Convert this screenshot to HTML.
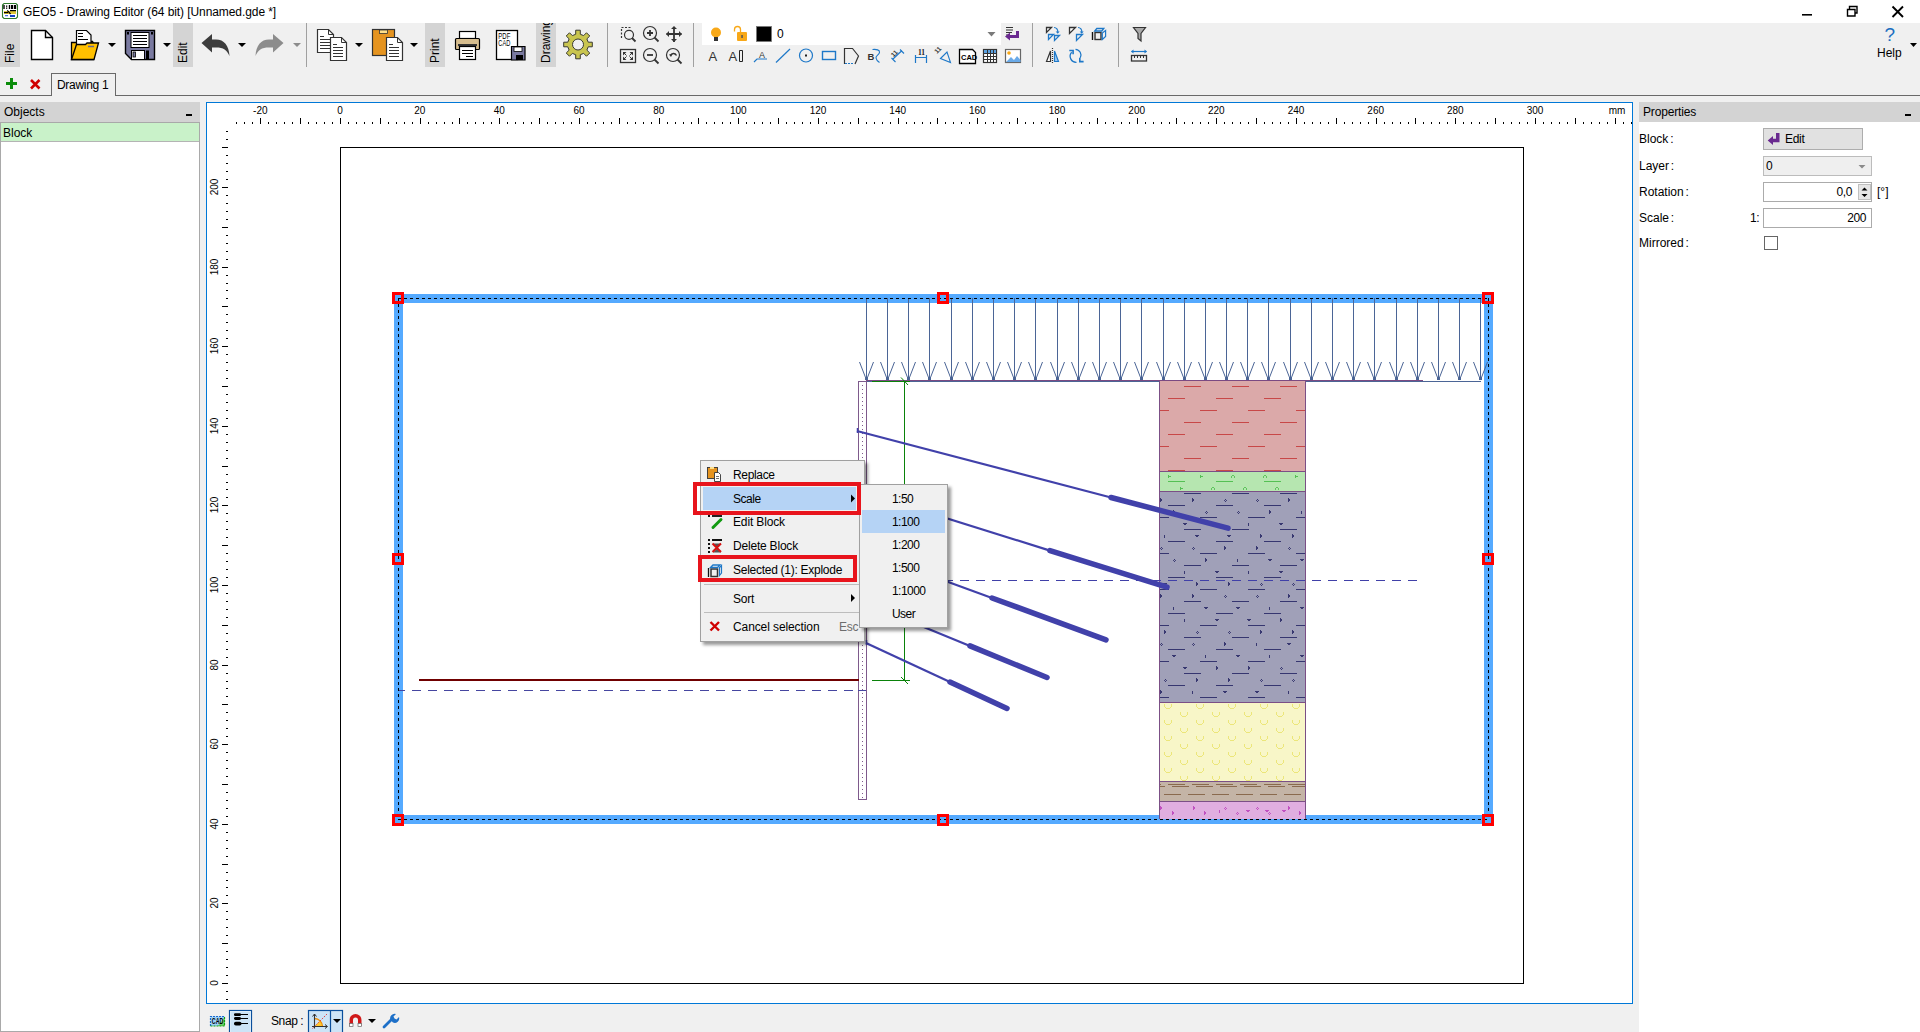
<!DOCTYPE html>
<html><head><meta charset="utf-8">
<style>
html,body{margin:0;padding:0;width:1920px;height:1032px;overflow:hidden;background:#f0f0f0;font-family:"Liberation Sans",sans-serif;}
.a{position:absolute;}
.t{position:absolute;white-space:nowrap;font-size:12px;line-height:14px;color:#000;}
svg{position:absolute;overflow:visible;}
</style></head><body>
<div class="a" style="left:0px;top:0px;width:1920px;height:23px;background:#fff;"></div>
<div class="a" style="left:0px;top:102px;width:200px;height:930px;background:#fff;"></div>
<div class="a" style="left:0px;top:102px;width:200px;height:20px;background:#d3d3d3;"></div>
<div class="a" style="left:0px;top:122px;width:200px;height:1px;background:#a9a9a9;"></div>
<div class="a" style="left:0px;top:122px;width:1px;height:910px;background:#a9a9a9;"></div>
<div class="a" style="left:199px;top:122px;width:1px;height:910px;background:#a9a9a9;"></div>
<div class="a" style="left:0px;top:1031px;width:200px;height:1px;background:#a9a9a9;"></div>
<div class="a" style="left:1px;top:123px;width:198px;height:18px;background:#c9f2c9;"></div>
<div class="a" style="left:1px;top:141px;width:198px;height:1px;background:#b4b4b4;"></div>
<div class="t" style="left:4px;top:105px;font-size:12px;color:#000;">Objects</div>
<div class="a" style="left:186px;top:114px;width:6px;height:2px;background:#000;"></div>
<div class="t" style="left:3px;top:126px;font-size:12px;color:#000;">Block</div>
<div class="a" style="left:1639px;top:102px;width:281px;height:930px;background:#fff;"></div>
<div class="a" style="left:1639px;top:102px;width:281px;height:20px;background:#d3d3d3;"></div>
<div class="t" style="left:1643px;top:105px;font-size:12px;color:#000;letter-spacing:-0.15px">Properties</div>
<div class="a" style="left:1905px;top:114px;width:6px;height:2px;background:#000;"></div>
<div class="a" style="left:206px;top:102px;width:1427px;height:902px;background:#fff;box-sizing:border-box;border:1px solid #0078d7"></div>
<div class="a" style="left:0px;top:95px;width:52px;height:1px;background:#696969;"></div>
<div class="a" style="left:115px;top:95px;width:1805px;height:1px;background:#696969;"></div>
<div class="a" style="left:51px;top:73px;width:65px;height:23px;background:#f0f0f0;box-sizing:border-box;border:1px solid #696969;border-bottom:none"></div>
<div class="t" style="left:57px;top:78px;font-size:12px;color:#000;letter-spacing:-0.3px">Drawing 1</div>
<svg style="left:0px;top:70px;" width="50" height="25" viewBox="0 0 50 25"><path d="M11.5 8v11M6 13.5h11" stroke="#0a8c0a" stroke-width="3"/><path d="M31 10l8.5 8.5M39.5 10L31 18.5" stroke="#d00000" stroke-width="2.6"/></svg>
<div class="a" style="left:0px;top:23px;width:20px;height:44px;background:#d4d4d4;"></div>
<div class="a" style="left:0;top:23px;width:20px;height:44px;overflow:hidden"><div class="t" style="left:-12px;top:16px;width:44px;transform:rotate(-90deg);text-align:left;text-indent:5px">File</div></div>
<div class="a" style="left:173px;top:23px;width:20px;height:44px;background:#d4d4d4;"></div>
<div class="a" style="left:173px;top:23px;width:20px;height:44px;overflow:hidden"><div class="t" style="left:-12px;top:16px;width:44px;transform:rotate(-90deg);text-align:left;text-indent:5px">Edit</div></div>
<div class="a" style="left:425px;top:23px;width:20px;height:44px;background:#d4d4d4;"></div>
<div class="a" style="left:425px;top:23px;width:20px;height:44px;overflow:hidden"><div class="t" style="left:-12px;top:16px;width:44px;transform:rotate(-90deg);text-align:left;text-indent:5px">Print</div></div>
<div class="a" style="left:536px;top:23px;width:20px;height:44px;background:#d4d4d4;"></div>
<div class="a" style="left:536px;top:23px;width:20px;height:44px;overflow:hidden"><div class="t" style="left:-12px;top:16px;width:44px;transform:rotate(-90deg);text-align:left;text-indent:5px">Drawing</div></div>
<div class="a" style="left:306px;top:23px;width:1px;height:44px;background:#a0a0a0;"></div>
<div class="a" style="left:607px;top:23px;width:1px;height:44px;background:#a0a0a0;"></div>
<div class="a" style="left:693px;top:23px;width:1px;height:44px;background:#a0a0a0;"></div>
<div class="a" style="left:1032px;top:23px;width:1px;height:44px;background:#a0a0a0;"></div>
<div class="a" style="left:1118px;top:23px;width:1px;height:44px;background:#a0a0a0;"></div>
<div class="a" style="left:702px;top:23px;width:299px;height:22px;background:#fff;"></div>
<svg style="left:0px;top:0px;left:0;top:0" width="1920" height="70" viewBox="0 0 1920 70"><path d="M31.5 30.5h14l7 7v22h-21z" fill="#fff" stroke="#000" stroke-width="1.4"/><path d="M45.5 30.5v7h7" fill="none" stroke="#000" stroke-width="1.4"/><path d="M71.5 42.5h7l1-1h13l1 2v16h-22z" fill="#ffbf00" stroke="#000" stroke-width="1.3"/><path d="M76.5 30.5h10l4.5 4.5v12.5h-14.5z" fill="#fff" stroke="#000" stroke-width="1.2"/><path d="M78 33.5h5M78 36.5h5M78 39.5h10" stroke="#000" stroke-width="1"/><path d="M71.5 59.5l5-15h9l1.5-1.5h11.5l-4.5 16.5z" fill="#ffc000" stroke="#000" stroke-width="1.3"/><path d="M88 46.5h6" stroke="#6a6a90" stroke-width="1.5"/><path d="M125.5 30.5h29v29h-23l-6-6z" fill="#7a7aa0" stroke="#000" stroke-width="1.4"/><rect x="131" y="32.5" width="18" height="15" fill="#fff" stroke="#000" stroke-width="1"/><path d="M133 35.5h14M133 38.5h14M133 41.5h14M133 44.5h14" stroke="#000" stroke-width="1"/><rect x="131.5" y="50.5" width="13" height="9" fill="#fff" stroke="#000" stroke-width="1"/><rect x="133" y="52" width="2.5" height="5" fill="#7a7aa0" stroke="#000" stroke-width="0.8"/><rect x="146" y="50.5" width="3" height="9" fill="#000"/><rect x="127" y="32" width="2" height="2.5" fill="#000"/><rect x="151" y="32" width="2" height="2.5" fill="#000"/><path d="M108 43h8l-4 4z" fill="#000"/><path d="M163 43h8l-4 4z" fill="#000"/><path d="M238 43h8l-4 4z" fill="#000"/><path d="M355 43h8l-4 4z" fill="#000"/><path d="M410 43h8l-4 4z" fill="#000"/><path d="M293 43h8l-4 4z" fill="#8c8c8c"/><path d="M201.5 43l10.5-9v5.5h4c8 0 13 6 13.5 16.5c-2.5-6-6-8.5-13.5-8.5h-4v5z" fill="#3c3c3c"/><path d="M283.5 43l-10.5-9v5.5h-4c-8 0-13 6-13.5 16.5c2.5-6 6-8.5 13.5-8.5h4v5z" fill="#8c8c8c"/><path d="M317.5 29.5h11l5 5v18h-16z" fill="#fff" stroke="#333" stroke-width="1.2"/><path d="M328.5 29.5v5h5" fill="none" stroke="#333" stroke-width="1"/><path d="M320 36.5h4M320 39.5h10M320 42.5h10M320 45.5h10M320 48.5h10" stroke="#333" stroke-width="1"/><path d="M330.5 37.5h11l5 5v18h-16z" fill="#fff" stroke="#333" stroke-width="1.2"/><path d="M341.5 37.5v5h5" fill="none" stroke="#333" stroke-width="1"/><path d="M333 44.5h4M333 47.5h10M333 50.5h10M333 53.5h10M333 56.5h10" stroke="#333" stroke-width="1"/><rect x="372.5" y="29.5" width="22" height="26" fill="#e59420" stroke="#333" stroke-width="1.2"/><rect x="379.5" y="30" width="8" height="3.5" fill="#ffe08a" stroke="#333" stroke-width="0.8"/><path d="M386.5 37.5h11l5 5v18h-16z" fill="#fff" stroke="#333" stroke-width="1.2"/><path d="M397.5 37.5v5h5" fill="none" stroke="#333" stroke-width="1"/><path d="M389 44.5h4M389 47.5h10M389 50.5h10M389 53.5h10M389 56.5h10" stroke="#333" stroke-width="1"/><rect x="459.5" y="31.5" width="16" height="7" fill="#fff" stroke="#000" stroke-width="1.2"/><rect x="455.5" y="38.5" width="24" height="11" rx="1" fill="#d6bd8e" stroke="#000" stroke-width="1.2"/><rect x="458" y="44" width="19" height="2" fill="#333"/><rect x="459.5" y="46.5" width="16" height="13" fill="#fff" stroke="#000" stroke-width="1.2"/><path d="M462 50.5h11M462 53.5h11M466 56.5h7" stroke="#000" stroke-width="1"/><rect x="496.5" y="30.5" width="21" height="29" fill="#fff" stroke="#000" stroke-width="1.3"/><text x="498.3" y="38.6" font-family="Liberation Sans" font-size="8.5" fill="#000" textLength="12" lengthAdjust="spacingAndGlyphs">PDF</text><text x="498.3" y="45.8" font-family="Liberation Sans" font-size="8.5" fill="#000" textLength="12" lengthAdjust="spacingAndGlyphs">CAD</text><path d="M511.5 46.5h13.5v13.5h-13.5z" fill="#7a7aa0" stroke="#000" stroke-width="1.2"/><rect x="514" y="47" width="8" height="4.5" fill="#fff" stroke="#000" stroke-width="0.8"/><rect x="516" y="55" width="7" height="5" fill="#000"/><path d="M588.25 42.21L592.31 42.19L592.31 46.81L588.25 46.79L586.87 50.13L589.76 52.99L586.49 56.26L583.63 53.37L580.29 54.75L580.31 58.81L575.69 58.81L575.71 54.75L572.37 53.37L569.51 56.26L566.24 52.99L569.13 50.13L567.75 46.79L563.69 46.81L563.69 42.19L567.75 42.21L569.13 38.87L566.24 36.01L569.51 32.74L572.37 35.63L575.71 34.25L575.69 30.19L580.31 30.19L580.29 34.25L583.63 35.63L586.49 32.74L589.76 36.01L586.87 38.87z M583.5 44.5a5.5 5.5 0 1 0 -11 0a5.5 5.5 0 1 0 11 0z" fill="#c9c54f" fill-rule="evenodd" stroke="#3a3a30" stroke-width="1"/><path d="M621.5 38v-10.5h10.5" fill="none" stroke="#333" stroke-width="1.2" stroke-dasharray="2 1.5"/><circle cx="629" cy="34.8" r="4.5" fill="none" stroke="#333" stroke-width="1.2"/><path d="M632 38l3.5 3.5" stroke="#333" stroke-width="1.8"/><circle cx="650" cy="33" r="6.5" fill="none" stroke="#333" stroke-width="1.2"/><path d="M654.5 37.5l4 4" stroke="#333" stroke-width="1.8"/><path d="M647 33h6M650 30v6" stroke="#333" stroke-width="1.8"/><path d="M674 27v15M666.5 34h15" stroke="#333" stroke-width="1.8"/><path d="M674 26l-3 3h6zM674 42l-3-3h6zM666 34l3-3v6zM682 34l-3-3v6z" fill="#333"/><rect x="620.5" y="49.5" width="15" height="13" fill="none" stroke="#333" stroke-width="1.3"/><path d="M623 52h3.5l-3.5 3.5zM633 52h-3.5l3.5 3.5zM623 60h3.5l-3.5-3.5zM633 60h-3.5l3.5-3.5z" fill="#333"/><path d="M624 53l2.5 2.5M632 53l-2.5 2.5M624 59l2.5-2.5M632 59l-2.5-2.5" stroke="#333" stroke-width="1"/><circle cx="650" cy="55" r="6.5" fill="none" stroke="#333" stroke-width="1.2"/><path d="M654.5 59.5l4 4" stroke="#333" stroke-width="1.8"/><path d="M647 55h6" stroke="#333" stroke-width="1.8"/><circle cx="673" cy="55" r="6.5" fill="none" stroke="#333" stroke-width="1.2"/><path d="M677.5 59.5l4 4" stroke="#333" stroke-width="1.8"/><path d="M670.5 55.5c1-2.5 4.5-3 6 0" fill="none" stroke="#333" stroke-width="1.4"/><path d="M669 54.5l3.5-0.5-1.5 3z" fill="#333"/><circle cx="716" cy="32.5" r="5" fill="#f8a818"/><rect x="714" y="37" width="4" height="4" fill="#333"/><path d="M734.5 31.5v-2a3 3 0 0 1 6 0v3" fill="none" stroke="#f8a818" stroke-width="1.3"/><rect x="737" y="32" width="10" height="9" rx="1" fill="#f8a818"/><rect x="741.3" y="35" width="1.5" height="3" fill="#555"/><rect x="756.5" y="26.5" width="15" height="15" fill="#000" stroke="#777" stroke-width="0.8"/><text x="777" y="37.5" font-family="Liberation Sans" font-size="12" fill="#000">0</text><path d="M987.5 32h8l-4 4.5z" fill="#7a7a7a"/><text x="708.5" y="61" font-family="Liberation Sans" font-size="13" fill="#333">A</text><text x="728.5" y="61" font-family="Liberation Sans" font-size="13" fill="#333">A</text><path d="M739.5 50.5h3v11h-3z" fill="none" stroke="#222" stroke-width="1"/><text x="759" y="58" font-family="Liberation Sans" font-size="9" fill="#333">A</text><path d="M754 62l3-3h10" fill="none" stroke="#1e78c8" stroke-width="1.2"/><path d="M776 62.5L790 49" stroke="#1e78c8" stroke-width="1.2"/><circle cx="806" cy="55.5" r="6.5" fill="none" stroke="#1e78c8" stroke-width="1.2"/><rect x="805" y="54.5" width="2" height="2" fill="#222"/><rect x="822.5" y="51.5" width="13" height="8" fill="none" stroke="#1e78c8" stroke-width="1.4"/><path d="M844.5 64V48.5h8l6 7.5l-3.5 8" fill="none" stroke="#333" stroke-width="1.2"/><path d="M845 63.5h9" stroke="#1e78c8" stroke-width="1.2" stroke-dasharray="2 1"/><text x="867.5" y="59.6" font-family="Liberation Sans" font-size="9.5" font-weight="bold" fill="#333">B</text><path d="M872.5 49.5c4-0.5 7.5 0.5 7 3c-0.5 2.5-4 3-3.5 5.5c0.3 2 2 3.5 3.5 4.5" fill="none" stroke="#1e78c8" stroke-width="1.1"/><path d="M892.5 59.5L902 50.5M891.5 58l4 4M900 49.5l4 4" fill="none" stroke="#1e78c8" stroke-width="1.1"/><text x="0" y="0" font-family="Liberation Sans" font-size="6.5" font-weight="bold" fill="#333" transform="translate(893.5 57.5) rotate(-45)">11</text><text x="918" y="55.3" font-family="Liberation Serif" font-size="7.5" font-weight="bold" fill="#222">11</text><path d="M915.5 55v8M926.5 55v8M915.5 57.5h11" fill="none" stroke="#1e78c8" stroke-width="1.2"/><path d="M940.5 58.5l6.5-6.5 3.5 10.5z" fill="none" stroke="#1e78c8" stroke-width="1.1"/><text x="0" y="0" font-family="Liberation Sans" font-size="6.5" font-weight="bold" fill="#333" transform="translate(937 54) rotate(-45)">11</text><path d="M959.5 49.5h13l3 3v11h-16z" fill="#fff" stroke="#000" stroke-width="1.3"/><text x="961" y="60" font-family="Liberation Sans" font-size="7.5" font-weight="bold" fill="#000">CAD</text><rect x="983.5" y="49.5" width="13" height="13" fill="#fff" stroke="#333" stroke-width="1.2"/><rect x="984" y="50" width="12" height="3" fill="#5aa0e0"/><path d="M984 53.5h12M984 56.5h12M984 59.5h12M987.5 50v12M990.5 50v12M993.5 50v12" stroke="#333" stroke-width="1"/><rect x="1005.5" y="49.5" width="15" height="13" fill="#fff" stroke="#666" stroke-width="1.2"/><circle cx="1009" cy="53" r="1.8" fill="#f8a818"/><path d="M1006 62l5-5 3 3 3-4 3.5 4v2z" fill="#6aaae8"/><path d="M1006 27.5h7M1006 30h7M1006 32.5h6M1006 35h4" stroke="#333" stroke-width="1"/><path d="M1016 31h3v7h-9v2.5l-5-4 5-4v2.5h6z" fill="#6a2a90"/><path d="M1046.5 27.5h5l-5 5z" fill="#fff" stroke="#333" stroke-width="1.3"/><path d="M1048.5 34.5h5l-5 5zM1054.5 35.5h5l-5 5z" fill="none" stroke="#1e78c8" stroke-width="1.3"/><path d="M1054 27.5c2.5 0 4 2 3.8 4.5" fill="none" stroke="#1e78c8" stroke-width="1.2"/><path d="M1055.7 31.5h4l-2 2.3z" fill="#1e78c8"/><path d="M1069.5 27.5h6l-6 6z" fill="#fff" stroke="#333" stroke-width="1.3"/><path d="M1076.5 34.5h6l-6 6z" fill="none" stroke="#1e78c8" stroke-width="1.3"/><path d="M1078 27.5c2.5 0 4 2 3.8 4.5" fill="none" stroke="#1e78c8" stroke-width="1.2"/><path d="M1079.7 31.5h4l-2 2.3z" fill="#1e78c8"/><path d="M1092.5 32v8" stroke="#111" stroke-width="1.4"/><rect x="1095" y="32.5" width="6" height="7" fill="none" stroke="#333" stroke-width="1.4"/><path d="M1094.8 31l2-2.5h7l-2 2.5z" fill="none" stroke="#1e78c8" stroke-width="1.3"/><path d="M1102.3 39.5l3.3-3v-6l-3.3 2.5z" fill="none" stroke="#1e78c8" stroke-width="1.2"/><path d="M1046.5 61.5l4-10.5v10.5z" fill="#fff" stroke="#333" stroke-width="1.2"/><path d="M1054.5 51v10.5h4z" fill="#9ccaf4" stroke="#1e78c8" stroke-width="1.2"/><path d="M1052.5 48v15" stroke="#333" stroke-width="1.2" stroke-dasharray="1 1"/><path d="M1075.5 49.3a5.8 5.8 0 0 1 4.8 8.5M1076.5 62.3a6 6 0 0 1 -4.8 -10" fill="none" stroke="#1e78c8" stroke-width="1.3"/><path d="M1069.3 50.5h3.8v3.8M1079.8 57.8v3.8h3.8" fill="none" stroke="#1e78c8" stroke-width="1.6"/><path d="M1133.5 27.5h12l-4.5 6v7.5l-3-2.5v-5z" fill="#aaa" stroke="#333" stroke-width="1.2"/><path d="M1131.5 51.5h15" stroke="#1e78c8" stroke-width="1.2"/><path d="M1131 51.5l2.5-2v4zM1147 51.5l-2.5-2v4z" fill="#1e78c8"/><rect x="1131.5" y="55.5" width="15" height="5.5" fill="none" stroke="#333" stroke-width="1.3"/><path d="M1134.5 56v2M1137.5 56v2M1140.5 56v2M1143.5 56v2" stroke="#333" stroke-width="1"/><path d="M1910 43h7l-3.5 4z" fill="#000"/></svg>
<div class="t" style="left:1884.5px;top:24px;font-size:19px;line-height:22px;color:#1a6ec0">?</div>
<div class="t" style="left:1877px;top:46px;font-size:12px;color:#000;">Help</div>
<svg style="left:0px;top:0px;left:0;top:0" width="1920" height="23" viewBox="0 0 1920 23"><path d="M4 3.5h12l1.5 1.5v12l-1.5 1.5h-12l-1.5-1.5v-12z" fill="#fff" stroke="#2e7a2e" stroke-width="1.1"/><g fill="#000"><rect x="3.3" y="5" width="1.4" height="4"/><rect x="6" y="5.5" width="1.3" height="1.3"/><rect x="6" y="7.5" width="1.3" height="1.3"/><rect x="8.8" y="5" width="1.4" height="4"/><rect x="11" y="5" width="2.2" height="4"/><rect x="14" y="5" width="2.2" height="4"/></g><rect x="4" y="11" width="12" height="3" fill="#e0c838"/><rect x="10" y="10" width="6" height="1.2" fill="#000"/><rect x="4" y="12" width="4" height="1.2" fill="#000"/><path d="M7.3 10.3l3.3 3.7" stroke="#000" stroke-width="1.2"/><rect x="5" y="15.2" width="3" height="1" fill="#2050e0"/><rect x="10" y="15" width="5" height="2" fill="#1040c8"/><path d="M1802 14.8h10" stroke="#000" stroke-width="1.6"/><path d="M1849.5 9v-2.5h7.5v6.5h-2" fill="none" stroke="#000" stroke-width="1.4"/><path d="M1847.5 9.5h7.5v6.5h-7.5z" fill="#fff" stroke="#000" stroke-width="1.4"/><path d="M1892.5 6.5l10.5 10.5M1903 6.5l-10.5 10.5" stroke="#000" stroke-width="1.9"/></svg>
<div class="t" style="left:23px;top:5px;font-size:12px;color:#000;letter-spacing:-0.08px">GEO5 - Drawing Editor (64 bit) [Unnamed.gde *]</div>
<svg style="left:0px;top:0px;left:0;top:0" width="1920" height="1032" viewBox="0 0 1920 1032"><defs><clipPath id="cv"><rect x="207" y="103" width="1425" height="900"/></clipPath></defs><g clip-path="url(#cv)" shape-rendering="crispEdges"><path d="M236.5 122v2M244.5 122v2M252.5 122v2M260.5 118v6M268.5 122v2M276.5 122v2M284.5 122v2M292.5 122v2M300.5 118v6M308.5 122v2M316.5 122v2M324.5 122v2M332.5 122v2M340.5 118v6M348.5 122v2M356.5 122v2M364.5 122v2M372.5 122v2M380.5 118v6M388.5 122v2M396.5 122v2M404.5 122v2M412.5 122v2M420.5 118v6M428.5 122v2M436.5 122v2M444.5 122v2M452.5 122v2M459.5 118v6M467.5 122v2M475.5 122v2M483.5 122v2M491.5 122v2M499.5 118v6M507.5 122v2M515.5 122v2M523.5 122v2M531.5 122v2M539.5 118v6M547.5 122v2M555.5 122v2M563.5 122v2M571.5 122v2M579.5 118v6M587.5 122v2M595.5 122v2M603.5 122v2M611.5 122v2M619.5 118v6M627.5 122v2M635.5 122v2M643.5 122v2M651.5 122v2M659.5 118v6M667.5 122v2M675.5 122v2M683.5 122v2M691.5 122v2M698.5 118v6M706.5 122v2M714.5 122v2M722.5 122v2M730.5 122v2M738.5 118v6M746.5 122v2M754.5 122v2M762.5 122v2M770.5 122v2M778.5 118v6M786.5 122v2M794.5 122v2M802.5 122v2M810.5 122v2M818.5 118v6M826.5 122v2M834.5 122v2M842.5 122v2M850.5 122v2M858.5 118v6M866.5 122v2M874.5 122v2M882.5 122v2M890.5 122v2M898.5 118v6M906.5 122v2M914.5 122v2M922.5 122v2M930.5 122v2M937.5 118v6M945.5 122v2M953.5 122v2M961.5 122v2M969.5 122v2M977.5 118v6M985.5 122v2M993.5 122v2M1001.5 122v2M1009.5 122v2M1017.5 118v6M1025.5 122v2M1033.5 122v2M1041.5 122v2M1049.5 122v2M1057.5 118v6M1065.5 122v2M1073.5 122v2M1081.5 122v2M1089.5 122v2M1097.5 118v6M1105.5 122v2M1113.5 122v2M1121.5 122v2M1129.5 122v2M1137.5 118v6M1145.5 122v2M1153.5 122v2M1161.5 122v2M1169.5 122v2M1176.5 118v6M1184.5 122v2M1192.5 122v2M1200.5 122v2M1208.5 122v2M1216.5 118v6M1224.5 122v2M1232.5 122v2M1240.5 122v2M1248.5 122v2M1256.5 118v6M1264.5 122v2M1272.5 122v2M1280.5 122v2M1288.5 122v2M1296.5 118v6M1304.5 122v2M1312.5 122v2M1320.5 122v2M1328.5 122v2M1336.5 118v6M1344.5 122v2M1352.5 122v2M1360.5 122v2M1368.5 122v2M1376.5 118v6M1384.5 122v2M1392.5 122v2M1400.5 122v2M1408.5 122v2M1415.5 118v6M1423.5 122v2M1431.5 122v2M1439.5 122v2M1447.5 122v2M1455.5 118v6M1463.5 122v2M1471.5 122v2M1479.5 122v2M1487.5 122v2M1495.5 118v6M1503.5 122v2M1511.5 122v2M1519.5 122v2M1527.5 122v2M1535.5 118v6M1543.5 122v2M1551.5 122v2M1559.5 122v2M1567.5 122v2M1575.5 118v6M1583.5 122v2M1591.5 122v2M1599.5 122v2M1607.5 122v2M1615.5 118v6M1623.5 122v2M1631.5 122v2M226 999.5h2M226 991.5h2M222 983.5h6M226 975.5h2M226 967.5h2M226 959.5h2M226 951.5h2M222 943.5h6M226 935.5h2M226 927.5h2M226 919.5h2M226 911.5h2M222 903.5h6M226 895.5h2M226 887.5h2M226 880.5h2M226 872.5h2M222 864.5h6M226 856.5h2M226 848.5h2M226 840.5h2M226 832.5h2M222 824.5h6M226 816.5h2M226 808.5h2M226 800.5h2M226 792.5h2M222 784.5h6M226 776.5h2M226 768.5h2M226 760.5h2M226 752.5h2M222 744.5h6M226 736.5h2M226 728.5h2M226 720.5h2M226 712.5h2M222 704.5h6M226 696.5h2M226 688.5h2M226 681.5h2M226 673.5h2M222 665.5h6M226 657.5h2M226 649.5h2M226 641.5h2M226 633.5h2M222 625.5h6M226 617.5h2M226 609.5h2M226 601.5h2M226 593.5h2M222 585.5h6M226 577.5h2M226 569.5h2M226 561.5h2M226 553.5h2M222 545.5h6M226 537.5h2M226 529.5h2M226 521.5h2M226 513.5h2M222 505.5h6M226 497.5h2M226 489.5h2M226 482.5h2M226 474.5h2M222 466.5h6M226 458.5h2M226 450.5h2M226 442.5h2M226 434.5h2M222 426.5h6M226 418.5h2M226 410.5h2M226 402.5h2M226 394.5h2M222 386.5h6M226 378.5h2M226 370.5h2M226 362.5h2M226 354.5h2M222 346.5h6M226 338.5h2M226 330.5h2M226 322.5h2M226 314.5h2M222 306.5h6M226 298.5h2M226 290.5h2M226 283.5h2M226 275.5h2M222 267.5h6M226 259.5h2M226 251.5h2M226 243.5h2M226 235.5h2M222 227.5h6M226 219.5h2M226 211.5h2M226 203.5h2M226 195.5h2M222 187.5h6M226 179.5h2M226 171.5h2M226 163.5h2M226 155.5h2M222 147.5h6M226 139.5h2M226 131.5h2" stroke="#000" stroke-width="1" fill="none"/></g><g clip-path="url(#cv)"><rect x="340.5" y="147.5" width="1183" height="836" fill="none" stroke="#000" stroke-width="1" shape-rendering="crispEdges"/><g shape-rendering="crispEdges" fill="#55aaff"><rect x="394" y="294" width="1099" height="9"/><rect x="394" y="815" width="1099" height="9"/><rect x="394" y="294" width="9" height="530"/><rect x="1484" y="294" width="9" height="530"/></g><path d="M866.5 298v82M859.5 362L866.5 380L873.5 362M887.5 298v82M880.5 362L887.5 380L894.5 362M908.5 298v82M901.5 362L908.5 380L915.5 362M929.5 298v82M922.5 362L929.5 380L936.5 362M951.5 298v82M944.5 362L951.5 380L958.5 362M972.5 298v82M965.5 362L972.5 380L979.5 362M993.5 298v82M986.5 362L993.5 380L1000.5 362M1014.5 298v82M1007.5 362L1014.5 380L1021.5 362M1035.5 298v82M1028.5 362L1035.5 380L1042.5 362M1057.5 298v82M1050.5 362L1057.5 380L1064.5 362M1078.5 298v82M1071.5 362L1078.5 380L1085.5 362M1099.5 298v82M1092.5 362L1099.5 380L1106.5 362M1120.5 298v82M1113.5 362L1120.5 380L1127.5 362M1141.5 298v82M1134.5 362L1141.5 380L1148.5 362M1163.5 298v82M1156.5 362L1163.5 380L1170.5 362M1184.5 298v82M1177.5 362L1184.5 380L1191.5 362M1205.5 298v82M1198.5 362L1205.5 380L1212.5 362M1226.5 298v82M1219.5 362L1226.5 380L1233.5 362M1247.5 298v82M1240.5 362L1247.5 380L1254.5 362M1268.5 298v82M1261.5 362L1268.5 380L1275.5 362M1290.5 298v82M1283.5 362L1290.5 380L1297.5 362M1311.5 298v82M1304.5 362L1311.5 380L1318.5 362M1332.5 298v82M1325.5 362L1332.5 380L1339.5 362M1353.5 298v82M1346.5 362L1353.5 380L1360.5 362M1374.5 298v82M1367.5 362L1374.5 380L1381.5 362M1396.5 298v82M1389.5 362L1396.5 380L1403.5 362M1417.5 298v82M1410.5 362L1417.5 380L1424.5 362M1438.5 298v82M1431.5 362L1438.5 380L1445.5 362M1459.5 298v82M1452.5 362L1459.5 380L1466.5 362M1480.5 298v82M1473.5 362L1480.5 380L1487.5 362" stroke="#4b6596" stroke-width="1" fill="none"/><g fill="#4b6596" shape-rendering="crispEdges"><rect x="865" y="377" width="3" height="3"/><rect x="886" y="377" width="3" height="3"/><rect x="907" y="377" width="3" height="3"/><rect x="928" y="377" width="3" height="3"/><rect x="950" y="377" width="3" height="3"/><rect x="971" y="377" width="3" height="3"/><rect x="992" y="377" width="3" height="3"/><rect x="1013" y="377" width="3" height="3"/><rect x="1034" y="377" width="3" height="3"/><rect x="1056" y="377" width="3" height="3"/><rect x="1077" y="377" width="3" height="3"/><rect x="1098" y="377" width="3" height="3"/><rect x="1119" y="377" width="3" height="3"/><rect x="1140" y="377" width="3" height="3"/><rect x="1162" y="377" width="3" height="3"/><rect x="1183" y="377" width="3" height="3"/><rect x="1204" y="377" width="3" height="3"/><rect x="1225" y="377" width="3" height="3"/><rect x="1246" y="377" width="3" height="3"/><rect x="1267" y="377" width="3" height="3"/><rect x="1289" y="377" width="3" height="3"/><rect x="1310" y="377" width="3" height="3"/><rect x="1331" y="377" width="3" height="3"/><rect x="1352" y="377" width="3" height="3"/><rect x="1373" y="377" width="3" height="3"/><rect x="1395" y="377" width="3" height="3"/><rect x="1416" y="377" width="3" height="3"/><rect x="1437" y="377" width="3" height="3"/><rect x="1458" y="377" width="3" height="3"/><rect x="1479" y="377" width="3" height="3"/><rect x="866" y="381" width="615" height="1"/></g><rect x="866" y="380" width="557" height="1" fill="#7b4a82" shape-rendering="crispEdges"/><rect x="1159" y="381" width="146" height="90" fill="#dba9a9"/><rect x="1159" y="471" width="146" height="20" fill="#b6e6b0"/><rect x="1159" y="491" width="146" height="211" fill="#a0a0b8"/><rect x="1159" y="702" width="146" height="79" fill="#f8f6c8"/><rect x="1159" y="781" width="146" height="20" fill="#c4b4a6"/><rect x="1159" y="801" width="146" height="18" fill="#e0aee0"/><g shape-rendering="crispEdges"><rect x="1184" y="386" width="17" height="1" fill="#c84848"/><rect x="1232" y="386" width="17" height="1" fill="#c84848"/><rect x="1280" y="386" width="17" height="1" fill="#c84848"/><rect x="1168" y="398" width="17" height="1" fill="#c84848"/><rect x="1216" y="398" width="17" height="1" fill="#c84848"/><rect x="1264" y="398" width="17" height="1" fill="#c84848"/><rect x="1160" y="410" width="9" height="1" fill="#c84848"/><rect x="1200" y="410" width="17" height="1" fill="#c84848"/><rect x="1248" y="410" width="17" height="1" fill="#c84848"/><rect x="1296" y="410" width="9" height="1" fill="#c84848"/><rect x="1184" y="422" width="17" height="1" fill="#c84848"/><rect x="1232" y="422" width="17" height="1" fill="#c84848"/><rect x="1280" y="422" width="17" height="1" fill="#c84848"/><rect x="1168" y="434" width="17" height="1" fill="#c84848"/><rect x="1216" y="434" width="17" height="1" fill="#c84848"/><rect x="1264" y="434" width="17" height="1" fill="#c84848"/><rect x="1160" y="446" width="9" height="1" fill="#c84848"/><rect x="1200" y="446" width="17" height="1" fill="#c84848"/><rect x="1248" y="446" width="17" height="1" fill="#c84848"/><rect x="1296" y="446" width="9" height="1" fill="#c84848"/><rect x="1184" y="458" width="17" height="1" fill="#c84848"/><rect x="1232" y="458" width="17" height="1" fill="#c84848"/><rect x="1280" y="458" width="17" height="1" fill="#c84848"/><rect x="1168" y="470" width="17" height="1" fill="#c84848"/><rect x="1216" y="470" width="17" height="1" fill="#c84848"/><rect x="1264" y="470" width="17" height="1" fill="#c84848"/><rect x="1168" y="481" width="17" height="1" fill="#55c055"/><rect x="1216" y="481" width="17" height="1" fill="#55c055"/><rect x="1264" y="481" width="17" height="1" fill="#55c055"/><rect x="1184" y="493" width="17" height="1" fill="#363670"/><rect x="1232" y="493" width="17" height="1" fill="#363670"/><rect x="1280" y="493" width="17" height="1" fill="#363670"/><rect x="1168" y="505" width="17" height="1" fill="#363670"/><rect x="1216" y="505" width="17" height="1" fill="#363670"/><rect x="1264" y="505" width="17" height="1" fill="#363670"/><rect x="1160" y="517" width="9" height="1" fill="#363670"/><rect x="1200" y="517" width="17" height="1" fill="#363670"/><rect x="1248" y="517" width="17" height="1" fill="#363670"/><rect x="1296" y="517" width="9" height="1" fill="#363670"/><rect x="1184" y="529" width="17" height="1" fill="#363670"/><rect x="1232" y="529" width="17" height="1" fill="#363670"/><rect x="1280" y="529" width="17" height="1" fill="#363670"/><rect x="1168" y="541" width="17" height="1" fill="#363670"/><rect x="1216" y="541" width="17" height="1" fill="#363670"/><rect x="1264" y="541" width="17" height="1" fill="#363670"/><rect x="1160" y="553" width="9" height="1" fill="#363670"/><rect x="1200" y="553" width="17" height="1" fill="#363670"/><rect x="1248" y="553" width="17" height="1" fill="#363670"/><rect x="1296" y="553" width="9" height="1" fill="#363670"/><rect x="1184" y="565" width="17" height="1" fill="#363670"/><rect x="1232" y="565" width="17" height="1" fill="#363670"/><rect x="1280" y="565" width="17" height="1" fill="#363670"/><rect x="1168" y="577" width="17" height="1" fill="#363670"/><rect x="1216" y="577" width="17" height="1" fill="#363670"/><rect x="1264" y="577" width="17" height="1" fill="#363670"/><rect x="1160" y="589" width="9" height="1" fill="#363670"/><rect x="1200" y="589" width="17" height="1" fill="#363670"/><rect x="1248" y="589" width="17" height="1" fill="#363670"/><rect x="1296" y="589" width="9" height="1" fill="#363670"/><rect x="1184" y="601" width="17" height="1" fill="#363670"/><rect x="1232" y="601" width="17" height="1" fill="#363670"/><rect x="1280" y="601" width="17" height="1" fill="#363670"/><rect x="1168" y="613" width="17" height="1" fill="#363670"/><rect x="1216" y="613" width="17" height="1" fill="#363670"/><rect x="1264" y="613" width="17" height="1" fill="#363670"/><rect x="1160" y="625" width="9" height="1" fill="#363670"/><rect x="1200" y="625" width="17" height="1" fill="#363670"/><rect x="1248" y="625" width="17" height="1" fill="#363670"/><rect x="1296" y="625" width="9" height="1" fill="#363670"/><rect x="1184" y="637" width="17" height="1" fill="#363670"/><rect x="1232" y="637" width="17" height="1" fill="#363670"/><rect x="1280" y="637" width="17" height="1" fill="#363670"/><rect x="1168" y="649" width="17" height="1" fill="#363670"/><rect x="1216" y="649" width="17" height="1" fill="#363670"/><rect x="1264" y="649" width="17" height="1" fill="#363670"/><rect x="1160" y="661" width="9" height="1" fill="#363670"/><rect x="1200" y="661" width="17" height="1" fill="#363670"/><rect x="1248" y="661" width="17" height="1" fill="#363670"/><rect x="1296" y="661" width="9" height="1" fill="#363670"/><rect x="1184" y="673" width="17" height="1" fill="#363670"/><rect x="1232" y="673" width="17" height="1" fill="#363670"/><rect x="1280" y="673" width="17" height="1" fill="#363670"/><rect x="1168" y="685" width="17" height="1" fill="#363670"/><rect x="1216" y="685" width="17" height="1" fill="#363670"/><rect x="1264" y="685" width="17" height="1" fill="#363670"/><rect x="1160" y="697" width="9" height="1" fill="#363670"/><rect x="1200" y="697" width="17" height="1" fill="#363670"/><rect x="1248" y="697" width="17" height="1" fill="#363670"/><rect x="1296" y="697" width="9" height="1" fill="#363670"/><path d="M1160 498v4l2.5-2z" fill="#383870"/><path d="M1192 498v4l2.5-2z" fill="#383870"/><path d="M1225.5 498.5l1.5 1.5-1.5 1.5-1.5-1.5z" fill="none" stroke="#383870" stroke-width="0.9"/><path d="M1257.5 498.5l1.5 1.5-1.5 1.5-1.5-1.5z" fill="none" stroke="#383870" stroke-width="0.9"/><path d="M1288 498v4l2.5-2z" fill="#383870"/><path d="M1173 510v4l2.5-2z" fill="#383870"/><path d="M1206.5 510.5l1.5 1.5-1.5 1.5-1.5-1.5z" fill="none" stroke="#383870" stroke-width="0.9"/><path d="M1238.5 510.5l1.5 1.5-1.5 1.5-1.5-1.5z" fill="none" stroke="#383870" stroke-width="0.9"/><path d="M1269 510v4l2.5-2z" fill="#383870"/><rect x="1301" y="511" width="1" height="2.5" fill="#383870"/><path d="M1183 523h4l-2 2.5z" fill="#383870"/><path d="M1215 523h4l-2 2.5z" fill="#383870"/><rect x="1248" y="523" width="1" height="2.5" fill="#383870"/><path d="M1279 523h4l-2 2.5z" fill="#383870"/><rect x="1164" y="535" width="1" height="2.5" fill="#383870"/><path d="M1195 535h4l-2 2.5z" fill="#383870"/><path d="M1227 535h4l-2 2.5z" fill="#383870"/><path d="M1260 534v4l2.5-2z" fill="#383870"/><path d="M1292 534v4l2.5-2z" fill="#383870"/><path d="M1161.5 546.5l1.5 1.5-1.5 1.5-1.5-1.5z" fill="none" stroke="#383870" stroke-width="0.9"/><path d="M1193.5 546.5l1.5 1.5-1.5 1.5-1.5-1.5z" fill="none" stroke="#383870" stroke-width="0.9"/><path d="M1224 546v4l2.5-2z" fill="#383870"/><path d="M1256 546v4l2.5-2z" fill="#383870"/><path d="M1289.5 546.5l1.5 1.5-1.5 1.5-1.5-1.5z" fill="none" stroke="#383870" stroke-width="0.9"/><path d="M1174.5 558.5l1.5 1.5-1.5 1.5-1.5-1.5z" fill="none" stroke="#383870" stroke-width="0.9"/><path d="M1205 558v4l2.5-2z" fill="#383870"/><rect x="1237" y="559" width="1" height="2.5" fill="#383870"/><path d="M1268 559h4l-2 2.5z" fill="#383870"/><path d="M1300 559h4l-2 2.5z" fill="#383870"/><rect x="1184" y="571" width="1" height="2.5" fill="#383870"/><path d="M1215 571h4l-2 2.5z" fill="#383870"/><rect x="1248" y="571" width="1" height="2.5" fill="#383870"/><path d="M1279 571h4l-2 2.5z" fill="#383870"/><path d="M1163 583h4l-2 2.5z" fill="#383870"/><path d="M1196 582v4l2.5-2z" fill="#383870"/><path d="M1228 582v4l2.5-2z" fill="#383870"/><path d="M1261.5 582.5l1.5 1.5-1.5 1.5-1.5-1.5z" fill="none" stroke="#383870" stroke-width="0.9"/><path d="M1293.5 582.5l1.5 1.5-1.5 1.5-1.5-1.5z" fill="none" stroke="#383870" stroke-width="0.9"/><path d="M1160 594v4l2.5-2z" fill="#383870"/><path d="M1192 594v4l2.5-2z" fill="#383870"/><path d="M1225.5 594.5l1.5 1.5-1.5 1.5-1.5-1.5z" fill="none" stroke="#383870" stroke-width="0.9"/><path d="M1257.5 594.5l1.5 1.5-1.5 1.5-1.5-1.5z" fill="none" stroke="#383870" stroke-width="0.9"/><path d="M1288 594v4l2.5-2z" fill="#383870"/><rect x="1173" y="607" width="1" height="2.5" fill="#383870"/><path d="M1204 607h4l-2 2.5z" fill="#383870"/><path d="M1236 607h4l-2 2.5z" fill="#383870"/><rect x="1269" y="607" width="1" height="2.5" fill="#383870"/><path d="M1300 607h4l-2 2.5z" fill="#383870"/><rect x="1184" y="619" width="1" height="2.5" fill="#383870"/><path d="M1215 619h4l-2 2.5z" fill="#383870"/><path d="M1247 619h4l-2 2.5z" fill="#383870"/><path d="M1280 618v4l2.5-2z" fill="#383870"/><path d="M1164 630v4l2.5-2z" fill="#383870"/><path d="M1197.5 630.5l1.5 1.5-1.5 1.5-1.5-1.5z" fill="none" stroke="#383870" stroke-width="0.9"/><path d="M1229.5 630.5l1.5 1.5-1.5 1.5-1.5-1.5z" fill="none" stroke="#383870" stroke-width="0.9"/><path d="M1260 630v4l2.5-2z" fill="#383870"/><path d="M1292 630v4l2.5-2z" fill="#383870"/><path d="M1161.5 642.5l1.5 1.5-1.5 1.5-1.5-1.5z" fill="none" stroke="#383870" stroke-width="0.9"/><path d="M1193.5 642.5l1.5 1.5-1.5 1.5-1.5-1.5z" fill="none" stroke="#383870" stroke-width="0.9"/><path d="M1224 642v4l2.5-2z" fill="#383870"/><rect x="1256" y="643" width="1" height="2.5" fill="#383870"/><path d="M1287 643h4l-2 2.5z" fill="#383870"/><path d="M1172 655h4l-2 2.5z" fill="#383870"/><rect x="1205" y="655" width="1" height="2.5" fill="#383870"/><path d="M1236 655h4l-2 2.5z" fill="#383870"/><rect x="1269" y="655" width="1" height="2.5" fill="#383870"/><path d="M1300 655h4l-2 2.5z" fill="#383870"/><path d="M1183 667h4l-2 2.5z" fill="#383870"/><path d="M1216 666v4l2.5-2z" fill="#383870"/><path d="M1248 666v4l2.5-2z" fill="#383870"/><path d="M1281.5 666.5l1.5 1.5-1.5 1.5-1.5-1.5z" fill="none" stroke="#383870" stroke-width="0.9"/><path d="M1165.5 678.5l1.5 1.5-1.5 1.5-1.5-1.5z" fill="none" stroke="#383870" stroke-width="0.9"/><path d="M1196 678v4l2.5-2z" fill="#383870"/><path d="M1228 678v4l2.5-2z" fill="#383870"/><path d="M1261.5 678.5l1.5 1.5-1.5 1.5-1.5-1.5z" fill="none" stroke="#383870" stroke-width="0.9"/><path d="M1293.5 678.5l1.5 1.5-1.5 1.5-1.5-1.5z" fill="none" stroke="#383870" stroke-width="0.9"/><path d="M1160 690v4l2.5-2z" fill="#383870"/><rect x="1192" y="691" width="1" height="2.5" fill="#383870"/><path d="M1223 691h4l-2 2.5z" fill="#383870"/><path d="M1255 691h4l-2 2.5z" fill="#383870"/><rect x="1288" y="691" width="1" height="2.5" fill="#383870"/><path d="M1168 474.5v4l2.5-2z" fill="#55c055"/><path d="M1200 474.5v4l2.5-2z" fill="#55c055"/><path d="M1232.5 475.0l1.5 1.5-1.5 1.5-1.5-1.5z" fill="none" stroke="#55c055" stroke-width="0.9"/><path d="M1264.5 475.0l1.5 1.5-1.5 1.5-1.5-1.5z" fill="none" stroke="#55c055" stroke-width="0.9"/><path d="M1295 474.5v4l2.5-2z" fill="#55c055"/><path d="M1180 486.5v4l2.5-2z" fill="#55c055"/><path d="M1212.5 487.0l1.5 1.5-1.5 1.5-1.5-1.5z" fill="none" stroke="#55c055" stroke-width="0.9"/><path d="M1244.5 487.0l1.5 1.5-1.5 1.5-1.5-1.5z" fill="none" stroke="#55c055" stroke-width="0.9"/><path d="M1276.5 487.0l1.5 1.5-1.5 1.5-1.5-1.5z" fill="none" stroke="#55c055" stroke-width="0.9"/><path d="M1164 704q0.5 4.5 4 4.5t4 -4.5" fill="none" stroke="#ece67a" stroke-width="1"/><path d="M1196 704q0.5 4.5 4 4.5t4 -4.5" fill="none" stroke="#ece67a" stroke-width="1"/><path d="M1228 704q0.5 4.5 4 4.5t4 -4.5" fill="none" stroke="#ece67a" stroke-width="1"/><path d="M1260 704q0.5 4.5 4 4.5t4 -4.5" fill="none" stroke="#ece67a" stroke-width="1"/><path d="M1292 704q0.5 4.5 4 4.5t4 -4.5" fill="none" stroke="#ece67a" stroke-width="1"/><path d="M1180 712q0.5 4.5 4 4.5t4 -4.5" fill="none" stroke="#ece67a" stroke-width="1"/><path d="M1212 712q0.5 4.5 4 4.5t4 -4.5" fill="none" stroke="#ece67a" stroke-width="1"/><path d="M1244 712q0.5 4.5 4 4.5t4 -4.5" fill="none" stroke="#ece67a" stroke-width="1"/><path d="M1276 712q0.5 4.5 4 4.5t4 -4.5" fill="none" stroke="#ece67a" stroke-width="1"/><path d="M1164 720q0.5 4.5 4 4.5t4 -4.5" fill="none" stroke="#ece67a" stroke-width="1"/><path d="M1196 720q0.5 4.5 4 4.5t4 -4.5" fill="none" stroke="#ece67a" stroke-width="1"/><path d="M1228 720q0.5 4.5 4 4.5t4 -4.5" fill="none" stroke="#ece67a" stroke-width="1"/><path d="M1260 720q0.5 4.5 4 4.5t4 -4.5" fill="none" stroke="#ece67a" stroke-width="1"/><path d="M1292 720q0.5 4.5 4 4.5t4 -4.5" fill="none" stroke="#ece67a" stroke-width="1"/><path d="M1180 728q0.5 4.5 4 4.5t4 -4.5" fill="none" stroke="#ece67a" stroke-width="1"/><path d="M1212 728q0.5 4.5 4 4.5t4 -4.5" fill="none" stroke="#ece67a" stroke-width="1"/><path d="M1244 728q0.5 4.5 4 4.5t4 -4.5" fill="none" stroke="#ece67a" stroke-width="1"/><path d="M1276 728q0.5 4.5 4 4.5t4 -4.5" fill="none" stroke="#ece67a" stroke-width="1"/><path d="M1164 736q0.5 4.5 4 4.5t4 -4.5" fill="none" stroke="#ece67a" stroke-width="1"/><path d="M1196 736q0.5 4.5 4 4.5t4 -4.5" fill="none" stroke="#ece67a" stroke-width="1"/><path d="M1228 736q0.5 4.5 4 4.5t4 -4.5" fill="none" stroke="#ece67a" stroke-width="1"/><path d="M1260 736q0.5 4.5 4 4.5t4 -4.5" fill="none" stroke="#ece67a" stroke-width="1"/><path d="M1292 736q0.5 4.5 4 4.5t4 -4.5" fill="none" stroke="#ece67a" stroke-width="1"/><path d="M1180 744q0.5 4.5 4 4.5t4 -4.5" fill="none" stroke="#ece67a" stroke-width="1"/><path d="M1212 744q0.5 4.5 4 4.5t4 -4.5" fill="none" stroke="#ece67a" stroke-width="1"/><path d="M1244 744q0.5 4.5 4 4.5t4 -4.5" fill="none" stroke="#ece67a" stroke-width="1"/><path d="M1276 744q0.5 4.5 4 4.5t4 -4.5" fill="none" stroke="#ece67a" stroke-width="1"/><path d="M1164 752q0.5 4.5 4 4.5t4 -4.5" fill="none" stroke="#ece67a" stroke-width="1"/><path d="M1196 752q0.5 4.5 4 4.5t4 -4.5" fill="none" stroke="#ece67a" stroke-width="1"/><path d="M1228 752q0.5 4.5 4 4.5t4 -4.5" fill="none" stroke="#ece67a" stroke-width="1"/><path d="M1260 752q0.5 4.5 4 4.5t4 -4.5" fill="none" stroke="#ece67a" stroke-width="1"/><path d="M1292 752q0.5 4.5 4 4.5t4 -4.5" fill="none" stroke="#ece67a" stroke-width="1"/><path d="M1180 760q0.5 4.5 4 4.5t4 -4.5" fill="none" stroke="#ece67a" stroke-width="1"/><path d="M1212 760q0.5 4.5 4 4.5t4 -4.5" fill="none" stroke="#ece67a" stroke-width="1"/><path d="M1244 760q0.5 4.5 4 4.5t4 -4.5" fill="none" stroke="#ece67a" stroke-width="1"/><path d="M1276 760q0.5 4.5 4 4.5t4 -4.5" fill="none" stroke="#ece67a" stroke-width="1"/><path d="M1164 768q0.5 4.5 4 4.5t4 -4.5" fill="none" stroke="#ece67a" stroke-width="1"/><path d="M1196 768q0.5 4.5 4 4.5t4 -4.5" fill="none" stroke="#ece67a" stroke-width="1"/><path d="M1228 768q0.5 4.5 4 4.5t4 -4.5" fill="none" stroke="#ece67a" stroke-width="1"/><path d="M1260 768q0.5 4.5 4 4.5t4 -4.5" fill="none" stroke="#ece67a" stroke-width="1"/><path d="M1292 768q0.5 4.5 4 4.5t4 -4.5" fill="none" stroke="#ece67a" stroke-width="1"/><path d="M1180 776q0.5 4.5 4 4.5t4 -4.5" fill="none" stroke="#ece67a" stroke-width="1"/><path d="M1212 776q0.5 4.5 4 4.5t4 -4.5" fill="none" stroke="#ece67a" stroke-width="1"/><path d="M1244 776q0.5 4.5 4 4.5t4 -4.5" fill="none" stroke="#ece67a" stroke-width="1"/><path d="M1276 776q0.5 4.5 4 4.5t4 -4.5" fill="none" stroke="#ece67a" stroke-width="1"/><rect x="1160" y="784" width="1" height="1" fill="#8a6a4e"/><rect x="1168" y="784" width="17" height="1" fill="#8a6a4e"/><rect x="1192" y="784" width="17" height="1" fill="#8a6a4e"/><rect x="1216" y="784" width="17" height="1" fill="#8a6a4e"/><rect x="1240" y="784" width="17" height="1" fill="#8a6a4e"/><rect x="1264" y="784" width="17" height="1" fill="#8a6a4e"/><rect x="1288" y="784" width="17" height="1" fill="#8a6a4e"/><rect x="1160" y="786" width="5" height="1" fill="#8a6a4e"/><rect x="1172" y="786" width="17" height="1" fill="#8a6a4e"/><rect x="1196" y="786" width="17" height="1" fill="#8a6a4e"/><rect x="1220" y="786" width="17" height="1" fill="#8a6a4e"/><rect x="1244" y="786" width="17" height="1" fill="#8a6a4e"/><rect x="1268" y="786" width="17" height="1" fill="#8a6a4e"/><rect x="1292" y="786" width="13" height="1" fill="#8a6a4e"/><rect x="1164" y="794" width="17" height="1" fill="#8a6a4e"/><rect x="1188" y="794" width="17" height="1" fill="#8a6a4e"/><rect x="1212" y="794" width="17" height="1" fill="#8a6a4e"/><rect x="1236" y="794" width="17" height="1" fill="#8a6a4e"/><rect x="1260" y="794" width="17" height="1" fill="#8a6a4e"/><rect x="1284" y="794" width="17" height="1" fill="#8a6a4e"/><path d="M1160 806v4l2.5-2z" fill="#c050c0"/><path d="M1193 806v4l2.5-2z" fill="#c050c0"/><path d="M1225.5 806.5l1.5 1.5-1.5 1.5-1.5-1.5z" fill="none" stroke="#c050c0" stroke-width="0.9"/><path d="M1257.5 806.5l1.5 1.5-1.5 1.5-1.5-1.5z" fill="none" stroke="#c050c0" stroke-width="0.9"/><path d="M1288 806v4l2.5-2z" fill="#c050c0"/><path d="M1172 811v4l2.5-2z" fill="#c050c0"/><path d="M1204 811v4l2.5-2z" fill="#c050c0"/><rect x="1219" y="810" width="1" height="2.5" fill="#c050c0"/><path d="M1237.5 811.5l1.5 1.5-1.5 1.5-1.5-1.5z" fill="none" stroke="#c050c0" stroke-width="0.9"/><path d="M1265 810h4l-2 2.5z" fill="#c050c0"/><path d="M1269.5 811.5l1.5 1.5-1.5 1.5-1.5-1.5z" fill="none" stroke="#c050c0" stroke-width="0.9"/><path d="M1299 811v4l2.5-2z" fill="#c050c0"/><path d="M1246 810h4l-2 2.5z" fill="#c050c0"/><path d="M1282 810h4l-2 2.5z" fill="#c050c0"/></g><g fill="#7b4f86" shape-rendering="crispEdges"><rect x="1159" y="471" width="147" height="1"/><rect x="1159" y="491" width="147" height="1"/><rect x="1159" y="702" width="147" height="1"/><rect x="1159" y="781" width="147" height="1"/><rect x="1159" y="801" width="147" height="1"/><rect x="1159" y="381" width="1" height="438"/><rect x="1305" y="381" width="1" height="438"/></g><rect x="858.5" y="381.5" width="8" height="418" fill="none" stroke="#7e5a8c" stroke-width="1" shape-rendering="crispEdges"/><g fill="#7e5a8c" shape-rendering="crispEdges"><rect x="862" y="385" width="1" height="1"/><rect x="862" y="389" width="1" height="1"/><rect x="862" y="393" width="1" height="1"/><rect x="862" y="397" width="1" height="1"/><rect x="862" y="401" width="1" height="1"/><rect x="862" y="405" width="1" height="1"/><rect x="862" y="409" width="1" height="1"/><rect x="862" y="413" width="1" height="1"/><rect x="862" y="417" width="1" height="1"/><rect x="862" y="421" width="1" height="1"/><rect x="862" y="425" width="1" height="1"/><rect x="862" y="429" width="1" height="1"/><rect x="862" y="433" width="1" height="1"/><rect x="862" y="437" width="1" height="1"/><rect x="862" y="441" width="1" height="1"/><rect x="862" y="445" width="1" height="1"/><rect x="862" y="449" width="1" height="1"/><rect x="862" y="453" width="1" height="1"/><rect x="862" y="457" width="1" height="1"/><rect x="862" y="461" width="1" height="1"/><rect x="862" y="465" width="1" height="1"/><rect x="862" y="469" width="1" height="1"/><rect x="862" y="473" width="1" height="1"/><rect x="862" y="477" width="1" height="1"/><rect x="862" y="481" width="1" height="1"/><rect x="862" y="485" width="1" height="1"/><rect x="862" y="489" width="1" height="1"/><rect x="862" y="493" width="1" height="1"/><rect x="862" y="497" width="1" height="1"/><rect x="862" y="501" width="1" height="1"/><rect x="862" y="505" width="1" height="1"/><rect x="862" y="509" width="1" height="1"/><rect x="862" y="513" width="1" height="1"/><rect x="862" y="517" width="1" height="1"/><rect x="862" y="521" width="1" height="1"/><rect x="862" y="525" width="1" height="1"/><rect x="862" y="529" width="1" height="1"/><rect x="862" y="533" width="1" height="1"/><rect x="862" y="537" width="1" height="1"/><rect x="862" y="541" width="1" height="1"/><rect x="862" y="545" width="1" height="1"/><rect x="862" y="549" width="1" height="1"/><rect x="862" y="553" width="1" height="1"/><rect x="862" y="557" width="1" height="1"/><rect x="862" y="561" width="1" height="1"/><rect x="862" y="565" width="1" height="1"/><rect x="862" y="569" width="1" height="1"/><rect x="862" y="573" width="1" height="1"/><rect x="862" y="577" width="1" height="1"/><rect x="862" y="581" width="1" height="1"/><rect x="862" y="585" width="1" height="1"/><rect x="862" y="589" width="1" height="1"/><rect x="862" y="593" width="1" height="1"/><rect x="862" y="597" width="1" height="1"/><rect x="862" y="601" width="1" height="1"/><rect x="862" y="605" width="1" height="1"/><rect x="862" y="609" width="1" height="1"/><rect x="862" y="613" width="1" height="1"/><rect x="862" y="617" width="1" height="1"/><rect x="862" y="621" width="1" height="1"/><rect x="862" y="625" width="1" height="1"/><rect x="862" y="629" width="1" height="1"/><rect x="862" y="633" width="1" height="1"/><rect x="862" y="637" width="1" height="1"/><rect x="862" y="641" width="1" height="1"/><rect x="862" y="645" width="1" height="1"/><rect x="862" y="649" width="1" height="1"/><rect x="862" y="653" width="1" height="1"/><rect x="862" y="657" width="1" height="1"/><rect x="862" y="661" width="1" height="1"/><rect x="862" y="665" width="1" height="1"/><rect x="862" y="669" width="1" height="1"/><rect x="862" y="673" width="1" height="1"/><rect x="862" y="677" width="1" height="1"/><rect x="862" y="681" width="1" height="1"/><rect x="862" y="685" width="1" height="1"/><rect x="862" y="689" width="1" height="1"/><rect x="862" y="693" width="1" height="1"/><rect x="862" y="697" width="1" height="1"/><rect x="862" y="701" width="1" height="1"/><rect x="862" y="705" width="1" height="1"/><rect x="862" y="709" width="1" height="1"/><rect x="862" y="713" width="1" height="1"/><rect x="862" y="717" width="1" height="1"/><rect x="862" y="721" width="1" height="1"/><rect x="862" y="725" width="1" height="1"/><rect x="862" y="729" width="1" height="1"/><rect x="862" y="733" width="1" height="1"/><rect x="862" y="737" width="1" height="1"/><rect x="862" y="741" width="1" height="1"/><rect x="862" y="745" width="1" height="1"/><rect x="862" y="749" width="1" height="1"/><rect x="862" y="753" width="1" height="1"/><rect x="862" y="757" width="1" height="1"/><rect x="862" y="761" width="1" height="1"/><rect x="862" y="765" width="1" height="1"/><rect x="862" y="769" width="1" height="1"/><rect x="862" y="773" width="1" height="1"/><rect x="862" y="777" width="1" height="1"/><rect x="862" y="781" width="1" height="1"/><rect x="862" y="785" width="1" height="1"/><rect x="862" y="789" width="1" height="1"/><rect x="862" y="793" width="1" height="1"/><rect x="862" y="797" width="1" height="1"/></g><rect x="419" y="679" width="440" height="2" fill="#700000" shape-rendering="crispEdges"/><path d="M398 690.5H858" stroke="#4646a0" stroke-width="1" stroke-dasharray="9 7" stroke-dashoffset="2" shape-rendering="crispEdges"/><path d="M858 690.5H866" stroke="#4646a0" stroke-width="1" shape-rendering="crispEdges"/><path d="M948 580.5H1418" stroke="#4040a8" stroke-width="1" stroke-dasharray="9 7" stroke-dashoffset="4" shape-rendering="crispEdges"/><g stroke="#0a820a" stroke-width="1" fill="none" shape-rendering="crispEdges"><path d="M904.5 381V680M872 381.5H910M872 680.5H910"/></g><g stroke="#0a820a" stroke-width="1" fill="none"><path d="M901 377.5L908 385M901 677L908 684"/></g><path d="M857 431L1111 497.5" stroke="#4141aa" stroke-width="2.2" fill="none"/><path d="M1111 497.5L1228 528.2" stroke="#4141aa" stroke-width="5.5" stroke-linecap="round" fill="none"/><path d="M857.5 428v5" stroke="#4141aa" stroke-width="1.5"/><path d="M858 490.5L1050 550.6" stroke="#4141aa" stroke-width="2.2" fill="none"/><path d="M1050 550.6L1167 587.2" stroke="#4141aa" stroke-width="5.5" stroke-linecap="round" fill="none"/><path d="M858.5 487.5v5" stroke="#4141aa" stroke-width="1.5"/><path d="M858 549L992 598.0" stroke="#4141aa" stroke-width="2.2" fill="none"/><path d="M992 598.0L1106 639.8" stroke="#4141aa" stroke-width="5.5" stroke-linecap="round" fill="none"/><path d="M858.5 546v5" stroke="#4141aa" stroke-width="1.5"/><path d="M858 600L970 645.9" stroke="#4141aa" stroke-width="2.2" fill="none"/><path d="M970 645.9L1047 677.5" stroke="#4141aa" stroke-width="5.5" stroke-linecap="round" fill="none"/><path d="M858.5 597v5" stroke="#4141aa" stroke-width="1.5"/><path d="M866 643L950 682.0" stroke="#4141aa" stroke-width="2.2" fill="none"/><path d="M950 682.0L1007 708.4" stroke="#4141aa" stroke-width="5.5" stroke-linecap="round" fill="none"/><path d="M866.5 640v5" stroke="#4141aa" stroke-width="1.5"/><path d="M398 298.5H1489M398 819.5H1489" stroke="#000" stroke-width="1" stroke-dasharray="3 3" shape-rendering="crispEdges"/><path d="M398.5 298V820M1488.5 298V820" stroke="#000" stroke-width="1" stroke-dasharray="3 3" shape-rendering="crispEdges"/><g fill="none" stroke="#ff0000" stroke-width="3" shape-rendering="crispEdges"><rect x="393.5" y="293.5" width="9" height="9"/><rect x="938.5" y="293.5" width="9" height="9"/><rect x="1483.5" y="293.5" width="9" height="9"/><rect x="393.5" y="554.5" width="9" height="9"/><rect x="1483.5" y="554.5" width="9" height="9"/><rect x="393.5" y="815.5" width="9" height="9"/><rect x="938.5" y="815.5" width="9" height="9"/><rect x="1483.5" y="815.5" width="9" height="9"/></g></g></svg>
<div class="t" style="left:230.3px;top:105px;width:60px;text-align:center;font-size:10px;line-height:12px">-20</div>
<div class="t" style="left:310.0px;top:105px;width:60px;text-align:center;font-size:10px;line-height:12px">0</div>
<div class="t" style="left:389.7px;top:105px;width:60px;text-align:center;font-size:10px;line-height:12px">20</div>
<div class="t" style="left:469.3px;top:105px;width:60px;text-align:center;font-size:10px;line-height:12px">40</div>
<div class="t" style="left:549.0px;top:105px;width:60px;text-align:center;font-size:10px;line-height:12px">60</div>
<div class="t" style="left:628.7px;top:105px;width:60px;text-align:center;font-size:10px;line-height:12px">80</div>
<div class="t" style="left:708.3px;top:105px;width:60px;text-align:center;font-size:10px;line-height:12px">100</div>
<div class="t" style="left:788.0px;top:105px;width:60px;text-align:center;font-size:10px;line-height:12px">120</div>
<div class="t" style="left:867.7px;top:105px;width:60px;text-align:center;font-size:10px;line-height:12px">140</div>
<div class="t" style="left:947.3px;top:105px;width:60px;text-align:center;font-size:10px;line-height:12px">160</div>
<div class="t" style="left:1027.0px;top:105px;width:60px;text-align:center;font-size:10px;line-height:12px">180</div>
<div class="t" style="left:1106.7px;top:105px;width:60px;text-align:center;font-size:10px;line-height:12px">200</div>
<div class="t" style="left:1186.3px;top:105px;width:60px;text-align:center;font-size:10px;line-height:12px">220</div>
<div class="t" style="left:1266.0px;top:105px;width:60px;text-align:center;font-size:10px;line-height:12px">240</div>
<div class="t" style="left:1345.7px;top:105px;width:60px;text-align:center;font-size:10px;line-height:12px">260</div>
<div class="t" style="left:1425.3px;top:105px;width:60px;text-align:center;font-size:10px;line-height:12px">280</div>
<div class="t" style="left:1505.0px;top:105px;width:60px;text-align:center;font-size:10px;line-height:12px">300</div>
<div class="t" style="left:1602px;top:105px;width:30px;text-align:center;font-size:10px;line-height:12px">mm</div>
<div class="t" style="left:184.5px;top:977.0px;width:60px;text-align:center;font-size:10px;line-height:12px;transform:rotate(-90deg)">0</div>
<div class="t" style="left:184.5px;top:897.4px;width:60px;text-align:center;font-size:10px;line-height:12px;transform:rotate(-90deg)">20</div>
<div class="t" style="left:184.5px;top:817.8px;width:60px;text-align:center;font-size:10px;line-height:12px;transform:rotate(-90deg)">40</div>
<div class="t" style="left:184.5px;top:738.2px;width:60px;text-align:center;font-size:10px;line-height:12px;transform:rotate(-90deg)">60</div>
<div class="t" style="left:184.5px;top:658.6px;width:60px;text-align:center;font-size:10px;line-height:12px;transform:rotate(-90deg)">80</div>
<div class="t" style="left:184.5px;top:579.0px;width:60px;text-align:center;font-size:10px;line-height:12px;transform:rotate(-90deg)">100</div>
<div class="t" style="left:184.5px;top:499.4px;width:60px;text-align:center;font-size:10px;line-height:12px;transform:rotate(-90deg)">120</div>
<div class="t" style="left:184.5px;top:419.8px;width:60px;text-align:center;font-size:10px;line-height:12px;transform:rotate(-90deg)">140</div>
<div class="t" style="left:184.5px;top:340.2px;width:60px;text-align:center;font-size:10px;line-height:12px;transform:rotate(-90deg)">160</div>
<div class="t" style="left:184.5px;top:260.6px;width:60px;text-align:center;font-size:10px;line-height:12px;transform:rotate(-90deg)">180</div>
<div class="t" style="left:184.5px;top:181.0px;width:60px;text-align:center;font-size:10px;line-height:12px;transform:rotate(-90deg)">200</div>
<div class="a" style="left:700px;top:460px;width:165px;height:182px;background:#f0f0f0;border:1px solid #a0a0a0;box-sizing:border-box;box-shadow:3px 3px 3px rgba(0,0,0,0.4)"></div>
<div class="a" style="left:703px;top:487px;width:153px;height:23px;background:#b5d3f5;"></div>
<div class="a" style="left:704px;top:584px;width:156px;height:1px;background:#bdbdbd;"></div>
<div class="a" style="left:704px;top:612px;width:156px;height:1px;background:#bdbdbd;"></div>
<div class="t" style="left:733px;top:468px;font-size:12px;color:#000;letter-spacing:-0.33px">Replace</div>
<div class="t" style="left:733px;top:492px;font-size:12px;color:#000;letter-spacing:-0.44px">Scale</div>
<div class="t" style="left:733px;top:515px;font-size:12px;color:#000;letter-spacing:-0.14px">Edit Block</div>
<div class="t" style="left:733px;top:539px;font-size:12px;color:#000;letter-spacing:-0.2px">Delete Block</div>
<div class="t" style="left:733px;top:563px;font-size:12px;color:#000;letter-spacing:-0.27px">Selected (1): Explode</div>
<div class="t" style="left:733px;top:592px;font-size:12px;color:#000;letter-spacing:-0.25px">Sort</div>
<div class="t" style="left:733px;top:620px;font-size:12px;color:#000;letter-spacing:-0.1px">Cancel selection</div>
<div class="t" style="left:839px;top:620px;font-size:12px;color:#6d6d6d;letter-spacing:-0.3px">Esc</div>
<svg style="left:0px;top:0px;left:0;top:0;pointer-events:none" width="1920" height="1032" viewBox="0 0 1920 1032"><path d="M851 494.5v8l4-4z" fill="#000"/><path d="M851 594v8l4-4z" fill="#000"/><rect x="707.5" y="467.5" width="10" height="11" fill="#e59420" stroke="#333" stroke-width="0.9"/><rect x="710" y="467" width="4" height="2" fill="#ffe08a"/><path d="M714.5 472.5h4l2 2v7h-6z" fill="#fff" stroke="#333" stroke-width="0.9"/><path d="M716 476.5h3M716 478.5h3" stroke="#333" stroke-width="0.7"/><rect x="708" y="515" width="2" height="2" fill="#111"/><rect x="712" y="515" width="10" height="2" fill="#222"/><path d="M713 527.5l8-8" stroke="#119a11" stroke-width="3" stroke-linecap="round"/><g fill="#111"><rect x="708" y="539" width="2" height="2"/><rect x="708" y="543" width="2" height="2"/><rect x="708" y="547" width="2" height="2"/><rect x="708" y="551" width="2" height="2"/><rect x="712" y="539" width="10" height="2"/></g><path d="M713 543.5h8l-4 4zM713 552.5h8l-4-4z" fill="#555"/><path d="M712.5 543.5l8.5 8.5M721 543.5l-8.5 8.5" stroke="#d81010" stroke-width="2"/><path d="M708.5 568v9" stroke="#111" stroke-width="1.3"/><rect x="711" y="569" width="6.5" height="7.5" fill="none" stroke="#333" stroke-width="1.5"/><path d="M710.5 567.5l2.5-2.5h7l-2.5 2.5z" fill="none" stroke="#1e78c8" stroke-width="1.3"/><path d="M719.5 575.5l2-2.5v-7.5l-2 2z" fill="none" stroke="#1e78c8" stroke-width="1.2"/><path d="M710.5 622l8.5 8.5M719 622l-8.5 8.5" stroke="#d00000" stroke-width="2.4"/></svg>
<div class="a" style="left:859px;top:484px;width:89px;height:144px;background:#f0f0f0;border:1px solid #a0a0a0;box-sizing:border-box;box-shadow:3px 3px 3px rgba(0,0,0,0.4)"></div>
<div class="a" style="left:862px;top:510px;width:83px;height:23px;background:#b5d3f5;"></div>
<div class="t" style="left:892px;top:492px;font-size:12px;color:#000;letter-spacing:-0.55px">1:50</div>
<div class="t" style="left:892px;top:515px;font-size:12px;color:#000;letter-spacing:-0.55px">1:100</div>
<div class="t" style="left:892px;top:538px;font-size:12px;color:#000;letter-spacing:-0.55px">1:200</div>
<div class="t" style="left:892px;top:561px;font-size:12px;color:#000;letter-spacing:-0.55px">1:500</div>
<div class="t" style="left:892px;top:584px;font-size:12px;color:#000;letter-spacing:-0.55px">1:1000</div>
<div class="t" style="left:892px;top:607px;font-size:12px;color:#000;letter-spacing:-0.55px">User</div>
<div class="a" style="left:693px;top:482px;width:168px;height:33px;border:4px solid #e8141c;box-sizing:border-box"></div>
<div class="a" style="left:698px;top:555px;width:159px;height:27px;border:4px solid #e8141c;box-sizing:border-box"></div>
<div class="t" style="left:1639px;top:132px;font-size:12px;color:#000;word-spacing:-1.5px">Block :</div>
<div class="t" style="left:1639px;top:159px;font-size:12px;color:#000;word-spacing:-1.5px">Layer :</div>
<div class="t" style="left:1639px;top:185px;font-size:12px;color:#000;word-spacing:-1.5px">Rotation :</div>
<div class="t" style="left:1639px;top:211px;font-size:12px;color:#000;word-spacing:-1.5px">Scale :</div>
<div class="t" style="left:1639px;top:236px;font-size:12px;color:#000;word-spacing:-1.5px">Mirrored :</div>
<div class="a" style="left:1763px;top:128px;width:100px;height:22px;background:#e1e1e1;border:1px solid #adadad;box-sizing:border-box"></div>
<svg style="left:0px;top:0px;left:0;top:0" width="1920" height="260" viewBox="0 0 1920 260"><path d="M1776 133h3.5v9.2h-6.5v2.8l-5.3-4.5 5.3-4.5v2.7h3z" fill="#6a2a90"/></svg>
<div class="t" style="left:1785px;top:132px;font-size:12px;color:#000;letter-spacing:-0.3px">Edit</div>
<div class="a" style="left:1763px;top:156px;width:109px;height:20px;background:#efefef;border:1px solid #bcbcbc;box-sizing:border-box"></div>
<div class="t" style="left:1766px;top:159px;font-size:12px;color:#000;">0</div>
<svg style="left:0px;top:0px;left:0;top:0" width="1920" height="260" viewBox="0 0 1920 260"><path d="M1858.5 165h7l-3.5 3.5z" fill="#8a8a8a"/></svg>
<div class="a" style="left:1763px;top:182px;width:109px;height:20px;background:#fff;border:1px solid #ababab;box-sizing:border-box"></div>
<div class="t" style="left:1780px;top:185px;width:72px;text-align:right;letter-spacing:-0.4px">0,0</div>
<div class="a" style="left:1858px;top:184px;width:13px;height:16px;background:#e6e6e6;border:1px solid #c0c0c0;box-sizing:border-box"></div>
<svg style="left:0px;top:0px;left:0;top:0" width="1920" height="260" viewBox="0 0 1920 260"><path d="M1861.5 190.5h6l-3-3z M1861.5 194h6l-3 3z" fill="#000"/></svg>
<div class="t" style="left:1877px;top:185px;font-size:12px;color:#000;">[°]</div>
<div class="t" style="left:1750px;top:211px;font-size:12px;color:#000;letter-spacing:-0.5px">1:</div>
<div class="a" style="left:1763px;top:208px;width:109px;height:20px;background:#fff;border:1px solid #ababab;box-sizing:border-box"></div>
<div class="t" style="left:1790px;top:211px;width:76px;text-align:right;letter-spacing:-0.4px">200</div>
<div class="a" style="left:1764px;top:236px;width:14px;height:14px;background:#fff;border:1px solid #666;box-sizing:border-box"></div>
<svg style="left:0px;top:0px;left:0;top:0" width="1920" height="1032" viewBox="0 0 1920 1032"><rect x="210.5" y="1016.5" width="14" height="9.5" fill="#9ad0f8"/><path d="M218 1026l7-9.5v9.5z" fill="#6ccf6c"/><path d="M210.5 1026v-9.5h14" fill="none" stroke="#1a6ad0" stroke-width="1.2" stroke-dasharray="2 1"/><path d="M210.5 1026h14v-9.5" fill="none" stroke="#10a010" stroke-width="1.2" stroke-dasharray="2 1"/><text x="211.8" y="1024.3" font-family="Liberation Sans" font-size="9" font-weight="bold" fill="#000" textLength="11.5" lengthAdjust="spacingAndGlyphs">CAD</text><rect x="229.5" y="1010.5" width="22" height="23" fill="#cce4f7" stroke="#0a4f9c" stroke-width="1.2"/><rect x="230.5" y="1011.5" width="20" height="21" fill="none" stroke="#e4f2fc" stroke-width="0.8"/><path d="M234.5 1014.5h13.5M234.5 1018.5h13.5M234.5 1023.5h13.5" stroke="#000" stroke-width="1.2"/><rect x="234" y="1013.3" width="7" height="2.6" rx="1.2" fill="#000"/><rect x="234" y="1017" width="7" height="3" rx="1.4" fill="#000"/><rect x="234" y="1021.8" width="7.5" height="3.8" rx="1.8" fill="#000"/><rect x="308.5" y="1010.5" width="34" height="23" fill="#cce4f7" stroke="#0a4f9c" stroke-width="1.2"/><path d="M330.5 1011v22" stroke="#0a4f9c" stroke-width="1.2"/><path d="M314.5 1026.5L322.5 1026.5A8 8 0 0 0 320.2 1020.8z" fill="#ffc830"/><path d="M314.5 1018.5A8 8 0 0 1 322.5 1026.5" fill="none" stroke="#f08c00" stroke-width="1.3"/><path d="M312.5 1028.5l14.5-14.5" stroke="#e03030" stroke-width="0.9" stroke-dasharray="1.5 1.2"/><path d="M314.5 1014v14.5M312 1026.5h15" fill="none" stroke="#333" stroke-width="1.1"/><path d="M312.5 1016.5l2-2.5 2 2.5M325 1024.5l2.5 2-2.5 2" fill="none" stroke="#333" stroke-width="1"/><path d="M333 1019h8l-4 4z" fill="#000"/><path d="M349.5 1026v-6a6 6 0 0 1 12 0v6h-3.5v-6a2.5 2.5 0 0 0 -5 0v6z" fill="#d01818"/><rect x="349.5" y="1023.5" width="3.5" height="3" fill="#fff" stroke="#666" stroke-width="0.7"/><rect x="358" y="1023.5" width="3.5" height="3" fill="#fff" stroke="#666" stroke-width="0.7"/><path d="M368 1019h8l-4 4z" fill="#000"/><path d="M384 1027l8-8" stroke="#1e70c8" stroke-width="2.8" stroke-linecap="round"/><path d="M390.5 1020a4.5 4.5 0 0 1 5.5-6l-2.5 2.5 1 2 2 1 2.5-2.5a4.5 4.5 0 0 1 -6 5.5z" fill="#1e70c8"/></svg>
<div class="t" style="left:271px;top:1014px;font-size:12px;color:#000;letter-spacing:-0.4px">Snap :</div>
</body></html>
